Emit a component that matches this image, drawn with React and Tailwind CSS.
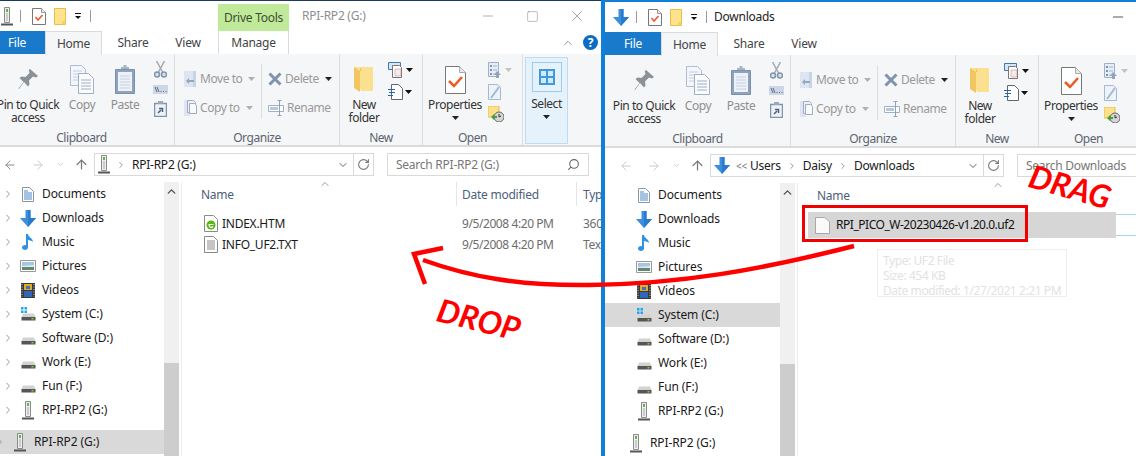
import React from "react";
import { ArrowLeft, ArrowRight, ArrowUp, ChevronDown, ChevronRight, ChevronUp, RotateCw, Search, X, Minus, Square } from "lucide-react";

const Svg = ({ w, h, children, className = "" }) => (
  <svg width={w} height={h} viewBox={`0 0 ${w} ${h}`} className={`shrink-0 ${className}`} fill="none">{children}</svg>
);

const UsbDrive = () => (
  <Svg w={12} h={21}>
    <path d="M3.5 1.5h5v15h-5z" fill="#eef0ee" stroke="#8a8a8a" />
    <path d="M5 3h2v3H5z" fill="#58b947" />
    <path d="M5 7h2v8H5z" fill="#c9cdc9" />
    <path d="M0 18.5h12" stroke="#555" strokeWidth="2" />
  </Svg>
);
const CheckDoc = () => (
  <Svg w={14} h={17}>
    <path d="M.5.5h9l4 4v12H.5z" fill="#fff" stroke="#777" />
    <path d="M9.5.5v4h4" stroke="#999" fill="#eee" />
    <path d="M3.5 9l2.5 3 4.5-5" stroke="#e8582b" strokeWidth="1.5" />
  </Svg>
);
const NoteFolder = () => (
  <Svg w={12} h={17}>
    <path d="M.5.5h11v16H.5z" fill="#ffe28c" stroke="#e8bd4f" />
    <path d="M8 13h3.5v3.5H8z" fill="#f7d164" />
  </Svg>
);
const QuickDrop = () => (
  <Svg w={8} h={8}>
    <path d="M1 1.5h6" stroke="#111" />
    <path d="M1 4h6L4 7z" fill="#111" />
  </Svg>
);
const BlueDown = ({ w = 16, h = 17 }) => (
  <svg width={w} height={h} viewBox="0 0 16 17" className="shrink-0">
    <path d="M5.5 0h5v8H16l-8 9-8-9h5.5z" fill="#3b8fdc" />
    <path d="M8 0h2.5v8H16l-8 9z" fill="#2a7bcb" />
  </svg>
);
const Pin = () => (
  <Svg w={21} h={21}>
    <path d="M12 0l8 7-2 1.5-3-1-4 4 .5 4-1.500 2-4-4.500L1 20l-.5-.5 5-6.500-4-4 2-1.500 4 .5 4-4-.8-3z" fill="#8a9197" />
  </Svg>
);
const CopyIcon = () => (
  <Svg w={24} h={29}>
    <path d="M.5.5h11l4 4v16H.5z" fill="#f3f6fb" stroke="#aebccf" />
    <path d="M3 6h9M3 9h9M3 12h9M3 15h9" stroke="#c3cede" />
    <path d="M8.500 8.500h10l5 5v15h-15z" fill="#f9fbfd" stroke="#9db0c8" />
    <path d="M11 15h10M11 18h10M11 21h10M11 24h10" stroke="#a0afc4" />
  </Svg>
);
const PasteIcon = () => (
  <Svg w={20} h={29}>
    <path d="M.5 4.500h19v24H.500z" fill="#8ea3bd" stroke="#7b90aa" />
    <path d="M3 7h14v19H3z" fill="#eef2f8" />
    <path d="M5 11h10M5 14h10M5 17h10M5 20h10M5 23h10" stroke="#c5d0df" />
    <path d="M6 4h8V2h-2.500V0h-3v2H6z" fill="#a9b5c6" />
  </Svg>
);
const ScissorsIcon = () => (
  <Svg w={13} h={17}>
    <path d="M2.500 0l6 11M10.500 0l-6 11" stroke="#a3a9b1" strokeWidth="1.500" />
    <circle cx="3" cy="13.500" r="2.500" fill="#dbe3ee" stroke="#7f93ad" strokeWidth="1.500" />
    <circle cx="10" cy="13.500" r="2.500" fill="#dbe3ee" stroke="#7f93ad" strokeWidth="1.500" />
  </Svg>
);
const ShortcutIcon = () => (
  <Svg w={15} h={9}>
    <path d="M0 0h15v9H0z" fill="#ccd6e6" />
    <path d="M2 2l2 5M4 2l2 5M7.500 6.500h1M10 6.500h1M12.500 6.500h1" stroke="#5d6d84" />
  </Svg>
);
const PasteShortcut = () => (
  <Svg w={13} h={16}>
    <path d="M.5 2.500h12v13H.5z" fill="#eef2f8" stroke="#8094ad" strokeWidth="1.500" />
    <path d="M4 0h5v3H4z" fill="#9aa9bc" />
    <path d="M4 12l3-3M5 7.500h3.500V11" stroke="#4e6079" strokeWidth="1.500" />
  </Svg>
);
const MoveIcon = () => (
  <Svg w={12} h={16}>
    <path d="M0 0h12v16H0z" fill="#dce5f1" />
    <path d="M9 0l3 0v16H9z" fill="#c7d4e5" />
    <path d="M2 10l3-3v2h5v2H5v2z" fill="#98a6b8" />
  </Svg>
);
const CopyToIcon = () => (
  <Svg w={13} h={16}>
    <path d="M0 0h6v16H0z" fill="#dce5f1" />
    <path d="M3.500.5h6l2 2v10h-8z" fill="#eef2f8" stroke="#9fadbf" />
    <path d="M5.500 3.500h5l2 2v8h-7z" fill="#f8fafc" stroke="#9fadbf" />
  </Svg>
);
const DeleteX = () => (
  <Svg w={14} h={14}>
    <path d="M1.500 1.500l11 11M12.500 1.500l-11 11" stroke="#7f93ad" strokeWidth="3" />
  </Svg>
);
const RenameIcon = () => (
  <Svg w={16} h={16}>
    <path d="M.5 5.500h15v6H.5z" fill="#fff" stroke="#9eb0c8" />
    <path d="M2 7h8v3H2z" fill="#b8c7da" />
    <path d="M11.500 1v15M9.500 .5h4M9.500 15.500h4" stroke="#8fa2bb" />
  </Svg>
);
const BigFolder = () => (
  <Svg w={20} h={27}>
    <path d="M0 1h19v24H7z" fill="#fbe08f" />
    <path d="M0 1l6 4v21l-6-4z" fill="#f1c660" />
    <path d="M6 5h2L6 1z" fill="#f1c660" />
  </Svg>
);
const NewItem = () => (
  <Svg w={16} h={16}>
    <path d="M.5.500h12v7H.5z" fill="#d6e6f7" stroke="#3d79b5" />
    <path d="M4.500 3.500h7l2 2v10h-9z" fill="#fff" stroke="#777" />
    <path d="M7 7h6v7H7z" fill="#eee" stroke="#c77" strokeWidth=".5" />
  </Svg>
);
const NewDoc = () => (
  <Svg w={15} h={16}>
    <path d="M3.500.5h7l4 4v11h-11z" fill="#fff" stroke="#666" />
    <path d="M0 5.500h7M1 8.500h6M0 11.500h5" stroke="#1f67b5" strokeWidth="1.200" />
  </Svg>
);
const BigCheck = () => (
  <Svg w={21} h={28}>
    <path d="M.5.5h14l6 6v21H.5z" fill="#fff" stroke="#777" />
    <path d="M14.500.5v6h6" fill="#eaeaea" stroke="#aaa" />
    <path d="M4 15l5 5 8-9" stroke="#ed5a24" strokeWidth="2.500" />
  </Svg>
);
const OpenIcon = () => (
  <Svg w={13} h={16}>
    <path d="M.5.500h10v14H.5z" fill="#e6edf6" stroke="#9db0c8" />
    <path d="M2 3h2v2H2zM2 7h2v2H2zM2 11h2v2H2z" fill="#7e93ae" />
    <path d="M5 4h4M5 8h4M5 12h2" stroke="#9db0c8" />
    <path d="M9 9l4 4h-2v3H8v-3H6z" fill="#90a4bd" />
  </Svg>
);
const EditIcon = () => (
  <Svg w={13} h={16}>
    <path d="M.5.500h9l3 3v12H.5z" fill="#eef3fa" stroke="#a5b8d2" />
    <path d="M3 14L11 3" stroke="#a5b8d2" strokeWidth="2" />
  </Svg>
);
const HistoryIcon = () => (
  <Svg w={16} h={16}>
    <path d="M0 0h11v11H0z" fill="#fce08b" stroke="#e9c04f" />
    <circle cx="11" cy="11" r="5" fill="#d5d5d5" stroke="#666" />
    <path d="M11 8v3l2-1" stroke="#333" />
    <path d="M3 11l3-3v2h3v2H6v2z" fill="#3fa63b" />
  </Svg>
);
const SelectIcon = () => (
  <Svg w={16} h={16}>
    <path d="M0 0h16v16H0z" fill="#3e9ae0" />
    <path d="M2 2h5v5H2zM9 2h5v5H9zM2 9h5v5H2zM9 9h5v5H9z" fill="#d4e9f9" />
  </Svg>
);
const Caret = ({ c = "#222", className = "" }) => (
  <svg width="7" height="4" viewBox="0 0 7 4" className={`shrink-0 ${className}`}><path d="M0 0h7L3.500 4z" fill={c} /></svg>
);

const DocsNav = () => (
  <Svg w={12} h={15}>
    <path d="M.5.500h7l4 4v10H.5z" fill="#fff" stroke="#8a97a6" />
    <path d="M2 4h4M2 6h8M2 8h8M2 10h8M2 12h8" stroke="#4a86c5" />
  </Svg>
);
const MusicNav = () => (
  <Svg w={12} h={16}>
    <path d="M4 0h2c0 3 5 4 5 8-1-1-3-2-5-2v7.500C6 15 4.500 16 3 16S0 15 0 13.500 1.500 11 3 11c.5 0 1 0 1 .5z" fill="#2f93e3" />
  </Svg>
);
const PicsNav = () => (
  <Svg w={16} h={12}>
    <path d="M.5.500h15v11H.5z" fill="#fff" stroke="#999" />
    <path d="M2 2h12v4H2z" fill="#a6c6e6" />
    <path d="M2 6h12v4H2z" fill="#5f8a6d" />
    <path d="M2 6l12-1v2H2z" fill="#dfe9ee" />
  </Svg>
);
const VideoNav = () => (
  <Svg w={14} h={15}>
    <path d="M0 0h14v15H0z" fill="#3a3a3a" />
    <path d="M3 1h8v6H3z" fill="#e2a92d" />
    <path d="M3 8h8v6H3z" fill="#2e66b8" />
    <path d="M5 3h4v3H5z" fill="#4472b9" />
    <path d="M1 1v13M13 1v13" stroke="#ccc" strokeDasharray="1 1.500" />
  </Svg>
);
const DriveNav = ({ win }) => (
  <Svg w={15} h={14}>
    {win && <path d="M0 0h2.500v2.500H0zM3.500 0H6v2.500H3.500zM0 3.500h2.500V6H0zM3.500 3.500H6V6H3.500z" fill="#22a5ee" />}
    <path d="M2 6.500h11l1.500 3.500H.5z" fill="#d2d2d2" />
    <path d="M.500 10h14v3.500H.500z" fill="#555" />
    <path d="M10.500 11h2v1.500h-2z" fill="#7ed321" />
  </Svg>
);

const navItems = [
  ["Documents", <DocsNav />],
  ["Downloads", <BlueDown />],
  ["Music", <MusicNav />],
  ["Pictures", <PicsNav />],
  ["Videos", <VideoNav />],
  ["System (C:)", <DriveNav win />],
  ["Software (D:)", <DriveNav />],
  ["Work (E:)", <DriveNav />],
  ["Fun (F:)", <DriveNav />],
  ["RPI-RP2 (G:)", <UsbDrive />],
];

const Tab = ({ w, children }) => (
  <div className={`${w} h-full flex items-center justify-center text-[#444]`}>{children}</div>
);

const Group = ({ w, label, children, sep = true }) => (
  <div className={`${w} h-full flex flex-col shrink-0 ${sep ? "border-r border-[#dcdddf]" : ""}`}>
    <div className="flex-1 flex pt-[7px] min-h-0">{children}</div>
    <div className="h-[15px] leading-[15px] text-center text-[#5b6470]">{label}</div>
  </div>
);

const Big = ({ w, icon, lines, gray, caret }) => (
  <div className={`${w} shrink-0 flex flex-col items-center`}>
    <div className="h-[37px] flex items-center justify-center">{icon}</div>
    {lines.map((l) => (
      <div key={l} className={`leading-[13px] whitespace-nowrap ${gray ? "text-[#8f8f8f]" : "text-[#333]"}`}>{l}</div>
    ))}
    {caret && <Caret c={caret} className="mt-[5px]" />}
  </div>
);

const SmallLine = ({ icon, text, caret, gap = "gap-[3px]" }) => (
  <div className={`h-[29px] flex items-center ${gap}`}>
    <div className="w-[14px] flex justify-center">{icon}</div>
    <span className="text-[#9a9a9a] whitespace-nowrap">{text}</span>
    <Caret c={caret} className="ml-[3px]" />
  </div>
);

const Ribbon = ({ select }) => (
  <div className="h-[93px] bg-[#f5f6f7] border-b-2 border-[#dadbdc] flex tracking-[-0.45px]">
    <Group w="w-[186px]" label="Clipboard">
      <Big w="w-[78px]" icon={<Pin />} lines={["Pin to Quick", "access"]} />
      <Big w="w-[30px]" icon={<CopyIcon />} lines={["Copy"]} gray />
      <Big w="w-[56px]" icon={<PasteIcon />} lines={["Paste"]} gray />
      <div className="w-[15px] flex flex-col items-center gap-[7px]">
        <ScissorsIcon />
        <ShortcutIcon />
        <PasteShortcut />
      </div>
    </Group>
    <Group w="w-[165px]" label="Organize">
      <div className="w-[86px] pl-[8px] pt-[3px]">
        <SmallLine icon={<MoveIcon />} text="Move to" caret="#b0b0b0" />
        <SmallLine icon={<CopyToIcon />} text="Copy to" caret="#b0b0b0" />
      </div>
      <div className="w-px h-[55px] mt-[3px] bg-[#dcdddf]" />
      <div className="pl-[6px] pt-[3px]">
        <SmallLine icon={<DeleteX />} text="Delete" caret="#222" gap="gap-[3px]" />
        <div className="h-[29px] flex items-center gap-[3px]">
          <div className="w-[16px]"><RenameIcon /></div>
          <span className="text-[#9a9a9a]">Rename</span>
        </div>
      </div>
    </Group>
    <Group w="w-[83px]" label="New">
      <Big w="w-[48px]" icon={<BigFolder />} lines={["New", "folder"]} />
      <div className="flex flex-col gap-[6px] pt-[1px]">
        <div className="flex items-center gap-[2px]"><NewItem /><Caret c="#111" /></div>
        <div className="flex items-center gap-[2px]"><NewDoc /><Caret c="#111" /></div>
      </div>
    </Group>
    <Group w="w-[100px]" label="Open">
      <Big w="w-[64px]" icon={<BigCheck />} lines={["Properties"]} caret="#222" />
      <div className="flex flex-col gap-[6px] pt-[1px] pl-[1px]">
        <div className="flex items-center gap-[4px]"><OpenIcon /><Caret c="#c2c2c2" /></div>
        <EditIcon />
        <HistoryIcon />
      </div>
    </Group>
    {select && (
      <div className="ml-[2px] w-[43px] mt-[3px] h-[87px] bg-[#e5f1fb] border border-[#bcdcf4] flex flex-col items-center">
        <div className="mt-[4px] w-[30px] h-[30px] border border-[#9ccdf0] flex items-center justify-center"><SelectIcon /></div>
        <div className="mt-[5px] leading-[13px] text-[#333]">Select</div>
        <Caret c="#222" className="mt-[5px]" />
      </div>
    )}
  </div>
);

const Scrollbar = () => (
  <div className="w-[15px] shrink-0 h-full bg-[#f0f0f0] flex flex-col items-center">
    <ChevronUp size={13} strokeWidth={2.5} color="#505050" className="mt-[3px]" />
    <div className="h-[165px]" />
    <div className="flex-1 w-full bg-[#cdcdcd]" />
  </div>
);

const Nav = ({ chevrons, selected, bottomSel }) => (
  <div className="w-[175px] shrink-0 text-[#1a1a1a] tracking-[-0.1px]">
    {navItems.map(([t, icon]) => (
      <div key={t} className={`h-[24px] flex items-center ${t === selected ? "bg-[#d9d9d9]" : ""}`}>
        <div className="w-[28px] flex justify-end pr-[3px]">
          {chevrons && <ChevronRight size={12} color="#9a9a9a" strokeWidth={2} />}
        </div>
        <div className="w-[22px] flex justify-center">{icon}</div>
        <span className="ml-[3px] whitespace-nowrap">{t}</span>
      </div>
    ))}
    <div className={`mt-[8px] h-[24px] flex items-center ${bottomSel ? "bg-[#d9d9d9]" : ""}`}>
      <div className="w-[20px] flex justify-end pr-[3px]">
        {chevrons && <ChevronRight size={12} color="#9a9a9a" strokeWidth={2} />}
      </div>
      <div className="w-[22px] flex justify-center"><UsbDrive /></div>
      <span className="ml-[3px] whitespace-nowrap">RPI-RP2 (G:)</span>
    </div>
  </div>
);

const Window = ({ active, title, context, path, search, addrLeft, nav, select, width, rows, dateCol, addrW, searchW, caretClass }) => (
  <div className={`${width} h-full bg-white text-[12px] leading-none flex flex-col`} style={{ fontFamily: '"Noto Sans", sans-serif', letterSpacing: "-0.25px" }}>
    <div className="h-[30px] flex items-center shrink-0">
      <div className="w-[31px] flex justify-end pr-[7px]">{active ? <BlueDown /> : <UsbDrive />}</div>
      <div className="w-px h-[12px] bg-[#999]" />
      <div className="ml-[11px]"><CheckDoc /></div>
      <div className="ml-[8px]"><NoteFolder /></div>
      <div className="ml-[8px]"><QuickDrop /></div>
      <div className="ml-[8px] w-px h-[12px] bg-[#999]" />
      {context ? (
        <>
          <div className="ml-[127px] w-[71px] h-[27px] mt-[3px] bg-[#c0ea9a] flex items-center justify-center text-[#3f4b35]">Drive Tools</div>
          <span className="ml-[13px] text-[#8e8e8e]">{title}</span>
        </>
      ) : (
        <span className="ml-[7px] text-[#222]">{title}</span>
      )}
      <div className="ml-auto flex items-center pr-[15px]">
        <Minus size={16} strokeWidth={1} color={active ? "#000" : "#888"} />
        <Square size={13} strokeWidth={1} color={active ? "#000" : "#888"} className="ml-[30px]" />
        <X size={18} strokeWidth={1} color={active ? "#000" : "#888"} className="ml-[29px]" />
      </div>
    </div>
    <div className="h-[23px] flex items-center shrink-0 relative">
      <div className="w-[56px] h-full bg-[#1979ca] text-white flex items-center justify-center">File</div>
      <div className="w-[57px] h-[24px] bg-[#f5f6f7] border border-b-0 border-[#dadbdc] flex items-center justify-center text-[#444] z-10 mt-[1px]">Home</div>
      <Tab w="w-[62px]">Share</Tab>
      <Tab w="w-[48px]">View</Tab>
      {context && (
        <>
          <div className="ml-[6px] w-[71px] h-full border-x border-[#dadbdc] flex items-center justify-center text-[#444]">Manage</div>
          <div className="ml-auto flex items-center pr-[3px] gap-[8px]">
            <ChevronUp size={14} color="#8a8a8a" strokeWidth={1.5} />
            <div className="w-[15px] h-[15px] rounded-full bg-[#0c6cc4] text-white text-[12px] font-bold flex items-center justify-center">?</div>
          </div>
        </>
      )}
    </div>
    <Ribbon select={select} />
    <div className="h-[31px] shrink-0 flex items-center pt-[4px]">
      <div className="w-[105px] flex items-center shrink-0">
        <ArrowLeft size={14} strokeWidth={1.5} color={active ? "#c4c4c4" : "#7a7a7a"} className="ml-[14px]" />
        <ArrowRight size={14} strokeWidth={1.5} color="#c4c4c4" className="ml-[14px]" />
        <ChevronDown size={9} strokeWidth={2} color="#c4c4c4" className="ml-[11px]" />
        <ArrowUp size={15} strokeWidth={2} color="#7a7a7a" className="ml-[9px]" />
      </div>
      <div className={`${addrW} h-[23px] shrink-0 border border-[#d9d9d9] flex items-center`}>
        <div className="flex-1 flex items-center gap-[6px] pl-[3px] text-[#1a1a1a] overflow-hidden whitespace-nowrap">
          {addrLeft}
          {path.map((p, i) => (
            <React.Fragment key={p}>
              {i > 0 && <ChevronRight size={10} color="#888" strokeWidth={2} />}
              <span>{p}</span>
            </React.Fragment>
          ))}
        </div>
        <ChevronDown size={12} strokeWidth={2} color="#666" className="mr-[4px]" />
        <div className="w-[20px] h-full border-l border-[#d9d9d9] flex items-center justify-center">
          <RotateCw size={13} color="#777" strokeWidth={2} />
        </div>
      </div>
      <div className={`${searchW} ml-[13px] h-[23px] shrink-0 border border-[#d9d9d9] flex items-center px-[8px] text-[#777]`}>
        <span className="flex-1 whitespace-nowrap">{search}</span>
        {context && <Search size={13} color="#666" strokeWidth={2} style={{ transform: "scaleX(-1)" }} />}
      </div>
    </div>
    <div className="flex-1 min-h-0 flex pt-[4px]">
      {nav}
      <Scrollbar />
      <div className="w-[3px] shrink-0 border-r border-[#ececec]" />
      <div className="flex-1 min-w-0">
        <div className="h-[24px] relative flex text-[#4c607a] whitespace-nowrap">
          <div className="w-[274px] shrink-0 pl-[19px] pt-[2px] flex items-center">Name</div>
          <ChevronUp size={12} strokeWidth={1.5} color="#777" className={`absolute -top-[4px] ${caretClass}`} />
          {dateCol && (
            <>
              <div className="w-[120px] shrink-0 pl-[5px] pt-[2px] border-l border-[#e5e5e5] flex items-center">Date modified</div>
              <div className="shrink-0 pl-[6px] pt-[2px] border-l border-[#e5e5e5] flex items-center">Type</div>
            </>
          )}
        </div>
        {rows}
      </div>
    </div>
  </div>
);

const FileIcon = ({ html }) => (
  <Svg w={14} h={17}>
    <path d="M.5.5h9l4 4v12H.5z" fill="#fff" stroke="#8a8a8a" />
    {html ? (
      <>
        <circle cx="7" cy="10" r="4.500" fill="#5ab70f" />
        <path d="M4.500 9.500h5M9 11.500C7.500 13 5.500 13 5 10" stroke="#fff" strokeWidth="1.200" />
      </>
    ) : (
      <path d="M3 5h8M3 7h8M3 9h8M3 11h8M3 13h8" stroke="#8a8a8a" />
    )}
  </Svg>
);

const FileRow = ({ name, html, type }) => (
  <div className="h-[21px] flex items-center text-[#1a1a1a]">
    <div className="ml-[21px] w-[15px] shrink-0 flex justify-center"><FileIcon html={html} /></div>
    <span className="ml-[4px] w-[240px] shrink-0 whitespace-nowrap">{name}</span>
    <span className="text-[#6d6d6d] w-[121px] shrink-0 whitespace-nowrap tracking-[-0.42px]">9/5/2008 4:20 PM</span>
    <span className="text-[#6d6d6d] whitespace-nowrap">{type}</span>
  </div>
);

export default function App() {
  return (
    <div className="relative w-[1136px] h-[456px] overflow-hidden flex bg-white">
      <div className="w-[601px] h-full overflow-hidden border-t border-[#1c3a5a] shrink-0">
        <div className="-ml-[11px]">
          <div className="h-[455px]">
            <Window
              width="w-[612px]"
              context
              title="RPI-RP2 (G:)"
              path={["RPI-RP2 (G:)"]}
              search="Search RPI-RP2 (G:)"
              addrLeft={<><UsbDrive /><ChevronRight size={10} color="#888" strokeWidth={2} /></>}
              addrW="w-[280px]"
              searchW="w-[202px]"
              select
              dateCol
              caretClass="left-[137px]"
              nav={<Nav chevrons bottomSel />}
              rows={
                <div className="pt-[7px]">
                  <FileRow name="INDEX.HTM" html type="360" />
                  <FileRow name="INFO_UF2.TXT" type="Text" />
                </div>
              }
            />
          </div>
        </div>
      </div>
      <div className="w-[535px] h-full overflow-hidden border-l-4 border-t-2 border-[#0f7fd9] shrink-0">
        <div className="h-[454px]">
          <Window
            active
            width="w-[626px]"
            title="Downloads"
            path={["Users", "Daisy", "Downloads"]}
            search="Search Downloads"
            addrLeft={<><BlueDown /><span className="text-[#777] text-[10px] -mr-[3px]">&lt;&lt;</span></>}
            addrW="w-[294px]"
            searchW="w-[214px]"
            caretClass="left-[194px]"
            nav={<Nav selected="System (C:)" />}
            rows={
              <div className="pt-[5px] flex items-center h-[31px]">
                <div className="ml-[10px] w-[308px] h-[26px] bg-[#d6d6d6] flex items-center shrink-0">
                  <div className="ml-[7px]">
                    <Svg w={15} h={17}>
                      <path d="M.5.5h9.500l4.500 4.500v11.500H.5z" fill="#fafafa" stroke="#a8a8a8" />
                    </Svg>
                  </div>
                  <span className="ml-[6px] text-[#111] whitespace-nowrap tracking-[-0.47px]">RPI_PICO_W-20230426-v1.20.0.uf2</span>
                </div>
                <div className="flex-1 h-[22px] border-y border-[#a6d4f5]" />
              </div>
            }
          />
        </div>
      </div>

      <div className="absolute left-[802px] top-[205px] w-[226px] h-[37px] border-[3px] border-[#f00000]" />
      <div
        className="absolute left-[877px] top-[249px] w-[190px] h-[48px] border border-[#eeeeee] bg-white text-[12px] leading-[15px] pl-[5px] pt-[3px] text-[#e2e2e2] whitespace-nowrap"
        style={{ fontFamily: '"Noto Sans", sans-serif', letterSpacing: "-0.42px" }}
      >
        <div>Type: UF2 File</div>
        <div>Size: 454 KB</div>
        <div>Date modified: 1/27/2021 2:21 PM</div>
      </div>

      <svg className="absolute left-0 top-0 pointer-events-none" width="1136" height="456" viewBox="0 0 1136 456" fill="none">
        <path d="M854 246C760 270 680 284 590 285C520 286 470 277 423 260" stroke="#ff0000" strokeWidth="4.500" />
        <path d="M443 248L414 254L425 284" stroke="#ff0000" strokeWidth="4.500" />
      </svg>
      <span className="absolute left-[1030px] top-[159px] text-[#ff0000] text-[32px] leading-none italic font-bold rotate-[16deg] origin-left" style={{ fontFamily: '"Lato", sans-serif' }}>DRAG</span>
      <span className="absolute left-[438px] top-[293px] text-[#ff0000] text-[32px] leading-none italic font-bold rotate-[14deg] origin-left" style={{ fontFamily: '"Lato", sans-serif' }}>DROP</span>
    </div>
  );
}
